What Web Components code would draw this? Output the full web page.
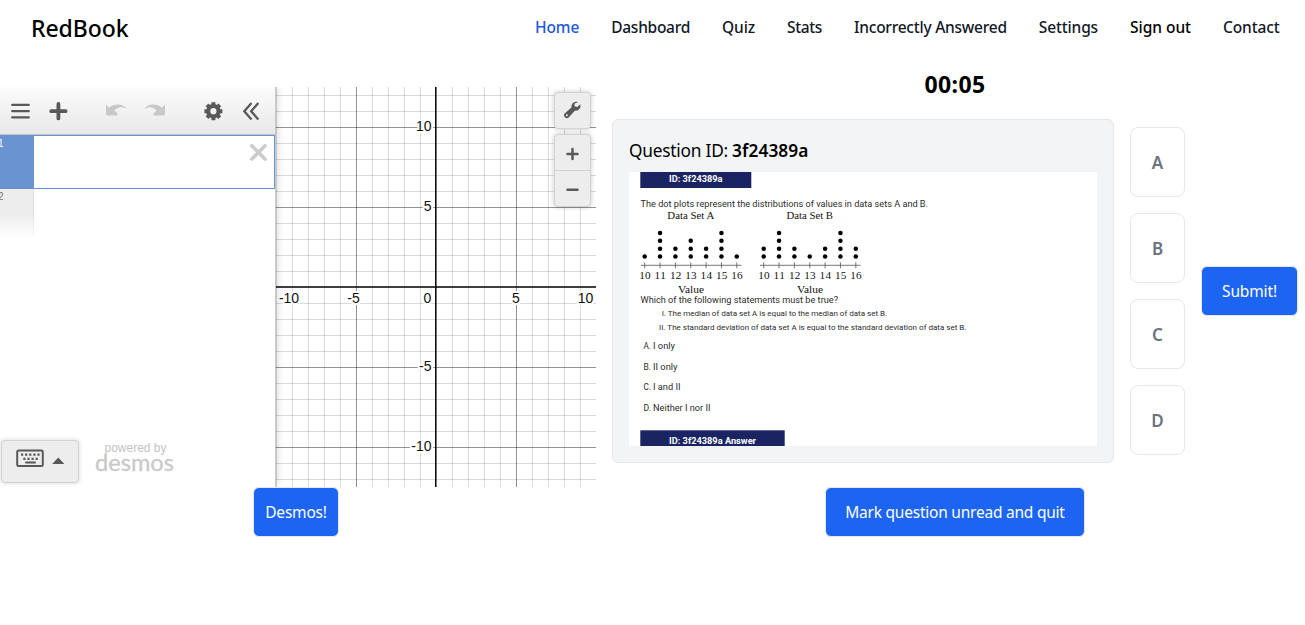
<!DOCTYPE html>
<html lang="en">
<head>
<meta charset="utf-8">
<title>RedBook</title>
<style>
body{margin:0;background:#fff;color:#000;font-family:"Noto Sans","Open Sans",sans-serif;font-size:16px;line-height:24px}
</style>
</head>
<body>
<quiz-page></quiz-page>
<script>
const define = (name, html, setup) => customElements.define(name, class extends HTMLElement {
  connectedCallback() {
    if (this.shadowRoot) return;
    this.attachShadow({mode: 'open'}).innerHTML = typeof html === 'function' ? html(this) : html;
    if (setup) setup(this);
  }
});

/* Text tracked so that its line spans the given width. */
define('fit-text', `<style>:host{display:inline-block;white-space:pre}span{display:inline-block}</style><span><slot></slot></span>`, el => {
  const w = +el.getAttribute('w'), span = el.shadowRoot.querySelector('span');
  el.style.width = w + 'px';
  span.style.letterSpacing = ((w - span.getBoundingClientRect().width) / el.textContent.length) + 'px';
});

define('site-header', `<style>
:host{display:flex;justify-content:space-between;align-items:center;height:56px;padding:0 25.5px 0 31px;box-sizing:border-box}
.brand{font-size:23px;font-weight:500;line-height:32px}
nav{display:flex;gap:32px;font-size:15.5px;font-weight:500;color:#111827;padding-bottom:2px}
.on{color:#2258df}.dark{color:#000}
</style>
<fit-text class="brand" w="97.5">RedBook</fit-text>
<nav><fit-text class="on" w="44.3">Home</fit-text><fit-text w="78.8">Dashboard</fit-text><fit-text w="33">Quiz</fit-text><fit-text w="35">Stats</fit-text><fit-text w="152.8">Incorrectly Answered</fit-text><fit-text w="59.2">Settings</fit-text><fit-text class="dark" w="61">Sign out</fit-text><fit-text w="56.5">Contact</fit-text></nav>`);

define('action-button', `<style>
:host{display:inline-flex}
button{width:var(--w);height:50px;padding:0;border:1px solid #e5e7eb;border-radius:6px;background:#1c64f2;color:#fff;font:400 15.5px/24px "Noto Sans","Open Sans",sans-serif}
</style><button><slot></slot></button>`);

define('answer-choice', `<style>
:host{display:flex;align-items:center;justify-content:center;width:55px;height:70px;padding-top:1px;box-sizing:border-box;border:1px solid #e5e7eb;border-radius:8px;color:#6b7280;font-size:17px;font-weight:600}
</style><slot></slot>`);

define('graph-paper', () => {
  let minor = '', major = '';
  for (let i = -12; i <= 12; i++) {
    if (!i) continue;
    const p = i * 16, row = `M0 ${200.5 + p}H320`, col = Math.abs(i) <= 10 ? `M${160.5 + p} 0V400` : '';
    if (i % 5) minor += row; else major += row;
    if (Math.abs(i) === 5) major += col; else minor += col;
  }
  const y = [[10, 44], [5, 124], [-5, 284], [-10, 364]].map(a => `<text x="155.5" y="${a[1]}" text-anchor="end">${a[0]}</text>`).join('');
  const x = [[-10, 13], [-5, 77.5], [0, 151.5], [5, 239.8], [10, 309.5]].map(a => `<text x="${a[1]}" y="216" text-anchor="middle">${a[0]}</text>`).join('');
  return `<style>:host{display:block;width:320px;height:400px}svg{display:block}
text{font:14px "Liberation Sans",sans-serif;fill:#111;stroke:#fff;stroke-width:4px;stroke-linejoin:round;paint-order:stroke}</style>
<svg width="320" height="400"><g fill="none"><path d="${minor}" stroke="#000" stroke-opacity=".14"/><path d="${major}" stroke="#000" stroke-opacity=".42"/><path d="M159.8 0V400M0 200H320" stroke="#000" stroke-width="1.5"/></g>${y}${x}</svg>`;
});

define('graph-tools', `<style>
:host{display:flex;flex-direction:column;gap:5px}
div{width:37px;box-sizing:border-box;border:1px solid #d3d3d3;border-radius:4px;background:#ededed;box-shadow:0 0 5px rgba(0,0,0,.22)}
svg{display:block}
</style>
<div><svg width="35" height="35" viewBox="0 0 35 35"><g transform="translate(-.3 -.5)"><path d="M23.5 9.4a5.2 5.2 0 0 0-6.8 5.7L10.2 20.7a2.75 2.75 0 1 0 4 4l5.9-6.4a5.2 5.2 0 0 0 5.6-6.6l-3.2 2.7-2.6-.6-.2-2.5z" fill="#595959"/><circle cx="12.2" cy="22.8" r="1" fill="#ededed"/></g></svg></div>
<div><svg width="35" height="71" viewBox="0 0 35 71"><path d="M0 35.5H35" stroke="#d3d3d3"/><path d="M12.5 19H22.5M17.5 14V24M12.5 54.8H22.5" stroke="#595959" stroke-width="2.5" stroke-linecap="round"/></svg></div>`);

define('expression-toolbar', `<style>
:host{display:block;height:48px;box-sizing:border-box;border-bottom:1px solid #c4c4c4;background:linear-gradient(#fcfcfc,#e8e8e8)}svg{display:block}
</style>
<svg width="275" height="47" fill="none">
<path d="M12.2 17.8H28.8M12.2 24.1H28.8M12.2 30.4H28.8" stroke="#595959" stroke-width="2.3" stroke-linecap="round"/>
<path d="M51.2 24.2H65.6M58.4 17V31.4" stroke="#595959" stroke-width="3.8" stroke-linecap="round"/>
<path d="M106 17.6l3 3.1c5.5-4.5 13.5-4.4 18.2 1.2-4.4-2.3-9.2-2.2-12.8 1.5l3 3.1c.7.8.3 1.9-.8 1.9h-9.2c-1 0-1.4-.5-1.4-1.4z" fill="#c8c8c8"/>
<path d="M165 17.6l-3 3.1c-5.5-4.5-13.5-4.4-18.2 1.2 4.4-2.3 9.2-2.2 12.8 1.5l-3 3.1c-.7.8-.3 1.9.8 1.9h9.2c1 0 1.4-.5 1.4-1.4z" fill="#c8c8c8"/>
<g stroke="#595959"><circle cx="213.4" cy="24.2" r="5.2" stroke-width="4.2"/>
<path d="M213.4 15.2V18M213.4 30.4V33.2M204.4 24.2H207M219.8 24.2H222.4M207 17.8L209 19.8M217.8 28.6L219.8 30.6M207 30.6L209 28.6M217.8 19.8L219.8 17.8" stroke-width="4"/></g>
<path d="M251.5 16L244.3 24.2L251.5 32.4M258.3 16L251.1 24.2L258.3 32.4" stroke="#595959" stroke-width="2.3"/>
</svg>`);

define('expression-list', `<style>
:host{display:block;font:10px/12px "Liberation Sans",sans-serif}
.row{display:flex;box-sizing:border-box;height:54px}
.row.on{border:1px solid #6a93d2;border-left:0;justify-content:space-between}
.n{width:34px;box-sizing:border-box;overflow:hidden;text-indent:-2px;padding-top:2px;color:#777}
.on .n{background:#6a93d2;color:#fff}
.next .n{height:50px;border-style:solid;border-image:linear-gradient(#ddd 50%,#fff) 1;border-width:0 1px 0 0;background:linear-gradient(#ededed 50%,#fff)}
svg{margin:6px 6px 0 0}
</style>
<div class="row on"><div class="n">1</div><svg width="20" height="20"><path d="M3.8 3.8L17 17M17 3.8L3.8 17" stroke="#ccc" stroke-width="3.7" stroke-linecap="round"/></svg></div>
<div class="row next"><div class="n">2</div></div>`);

define('keypad-toggle', `<style>
:host{display:block;width:78px;height:43px;box-sizing:border-box;border:1px solid #d3d3d3;border-radius:4px;background:#ededed;box-shadow:0 0 5px rgba(0,0,0,.16)}svg{display:block}
</style>
<svg width="76" height="41" fill="none" stroke="#595959"><rect x="15.2" y="9.6" width="25.6" height="15.5" rx="1.5" stroke-width="2"/>
<path d="M19 13.6H38" stroke-width="2.2" stroke-dasharray="2.2 1.9"/><path d="M21.3 17.8H36.5" stroke-width="2.2" stroke-dasharray="2.2 1.9"/><path d="M24 21.5H33" stroke-width="2" stroke-linecap="round"/>
<path d="M50.2 23L56.3 16.6L62.4 23z" fill="#595959" stroke="none"/></svg>`);

define('powered-by', `<style>:host{display:block}svg{display:block;overflow:visible}</style>
<svg width="80" height="34" fill="#c4c4c4"><text x="9.5" y="12" font-family="Liberation Sans,sans-serif" font-size="12" textLength="62">powered by</text>
<text x="0" y="31" font-family="Lato,sans-serif" font-size="23" textLength="79" lengthAdjust="spacingAndGlyphs" fill="#c9c9c9" stroke="#c9c9c9" stroke-width=".3">desmos</text></svg>`);

define('desmos-calculator', `<style>
:host{display:flex;position:relative;width:596px;height:400px;overflow:hidden}
aside{width:276px;box-sizing:border-box;border-right:1px solid #c8c8c8;display:flex;flex-direction:column;background:#fff;box-shadow:0 0 9px rgba(0,0,0,.2);z-index:1}
footer{display:flex;gap:16px;margin:auto 0 4px 1px;align-items:flex-start}
graph-tools{position:absolute;right:5px;top:5px;z-index:1}
</style>
<aside><expression-toolbar></expression-toolbar><expression-list></expression-list><footer><keypad-toggle></keypad-toggle><powered-by></powered-by></footer></aside>
<graph-paper></graph-paper><graph-tools></graph-tools>`);

define('question-sheet', () => {
  const plot = (x0, counts) => {
    let s = `<path d="M${x0 - 3.7} 93.3h100.5" stroke="#555" stroke-width=".8"/>`;
    counts.forEach((n, i) => {
      const x = x0 + i * 15.35;
      s += `<path d="M${x} 90.3v6" stroke="#555" stroke-width=".8"/><text class="s" x="${x - 5.5}" y="106.6" textLength="11.4">${10 + i}</text>`;
      for (let k = 0; k < n; k++) s += `<circle cx="${x}" cy="${84.5 - k * 7.85}" r="2.25"/>`;
    });
    return s;
  };
  const line = (t, x, y, w, c) => `<text x="${x}" y="${y}" textLength="${w}" lengthAdjust="spacingAndGlyphs" class="${c || ''}">${t}</text>`;
  return `<style>:host{display:block;width:468px;height:274px;background:#fff}svg{display:block}
text{font:9px Roboto,sans-serif;fill:#2c2c2c}.s{font:11.2px "Liberation Serif",serif;fill:#111}.b{font-weight:700;fill:#fff}.m{font-size:8px}.c{font-size:8.4px}</style>
<svg width="468" height="274"><rect x="11.3" y="0" width="111" height="16" fill="#1b2463"/><rect x="11.3" y="258.3" width="144.4" height="16" fill="#1b2463"/>
${line('ID: 3f24389a', 40, 9.5, 53.5, 'b')}${line('ID: 3f24389a Answer', 40, 271.6, 87, 'b')}
${line('The dot plots represent the distributions of values in data sets A and B.', 11.5, 35, 287.5)}
${line('Data Set A', 38.3, 46.8, 47, 's')}${line('Data Set B', 157.5, 46.8, 46.5, 's')}
${plot(15.7, [1, 4, 2, 3, 2, 4, 1])}${plot(134.7, [2, 4, 2, 1, 2, 4, 2])}
${line('Value', 49, 121, 26, 's')}${line('Value', 168, 121, 26, 's')}
${line('Which of the following statements must be true?', 11.5, 130.8, 197.5)}
${line('I. The median of data set A is equal to the median of data set B.', 32.7, 144.3, 225.5, 'm')}
${line('II. The standard deviation of data set A is equal to the standard deviation of data set B.', 30, 158, 307.5, 'm')}
${line('A.', 14.5, 177.3, 7.5, 'c')}${line('I only', 24, 177.3, 22)}
${line('B.', 14.5, 198, 7.5, 'c')}${line('II only', 24, 198, 24.5)}
${line('C.', 14.5, 218.3, 7.5, 'c')}${line('I and II', 24, 218.3, 27.5)}
${line('D.', 14.5, 239, 7.5, 'c')}${line('Neither I nor II', 24, 239, 57.5)}
</svg>`;
});

define('question-card', `<style>
:host{display:block;width:502px;height:344px;box-sizing:border-box;padding:17px 16px;border:1px solid #e5e7eb;border-radius:6px;background:#f3f4f6}
h2{margin:0;height:35px;font-size:17.3px;line-height:28px;font-weight:400;white-space:pre;display:flex;gap:4px}
b{font-weight:600}
</style>
<h2><fit-text w="99">Question ID:</fit-text><b><fit-text w="76.5">3f24389a</fit-text></b></h2>
<question-sheet></question-sheet>`);

define('quiz-page', `<style>
:host{display:block}
main{display:grid;grid-template-columns:596px 686px;column-gap:16px}
.calc{padding-top:31px;display:flex;flex-direction:column}
.calc action-button{align-self:center;margin-right:4px}
.quiz{display:flex;flex-direction:column;padding-top:12px}
.timer{align-self:center;font-weight:700;font-size:23px;line-height:32px;margin-bottom:19px}
.row{display:flex;gap:16px;align-items:center;height:344px}
.answers{display:flex;flex-direction:column;gap:16px}
.quiz>action-button{align-self:center;margin-top:24px}
</style>
<site-header></site-header>
<main>
<section class="calc"><desmos-calculator></desmos-calculator><action-button style="--w:86px"><fit-text w="61.5">Desmos!</fit-text></action-button></section>
<section class="quiz"><fit-text class="timer" w="61">00:05</fit-text>
<div class="row"><question-card></question-card><div class="answers"><answer-choice>A</answer-choice><answer-choice>B</answer-choice><answer-choice>C</answer-choice><answer-choice>D</answer-choice></div><action-button style="--w:97px"><fit-text w="55">Submit!</fit-text></action-button></div>
<action-button style="--w:260px"><fit-text w="219.5">Mark question unread and quit</fit-text></action-button></section>
</main>`);
</script>
</body>
</html>
